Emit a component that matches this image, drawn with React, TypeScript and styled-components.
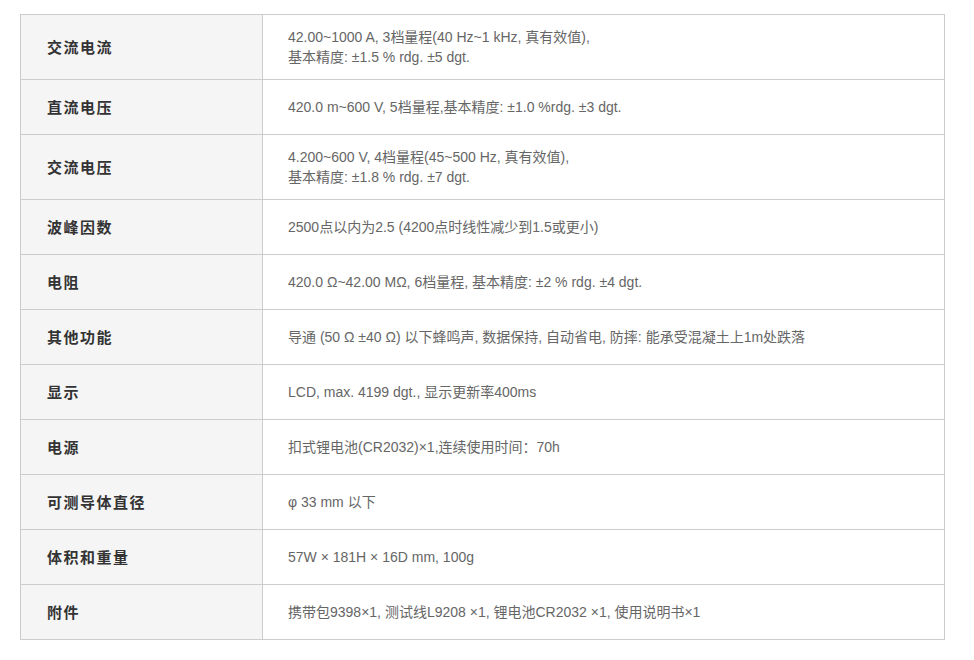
import styled, { createGlobalStyle } from "styled-components";

const Global = createGlobalStyle`
  html, body { margin: 0; padding: 0; background: #fff; }
  body { font-family: "Liberation Sans", Arial, "Noto Sans CJK SC", sans-serif; }
`;

const Page = styled.div`
  padding: 14px 30px 20px 20px;
`;

const SpecTable = styled.table`
  width: 925px;
  border-collapse: collapse;
  border: 1px solid #cccccc;
`;

const Row = styled.tr`
  border-bottom: 1px solid #cccccc;
`;

const Label = styled.th`
  width: 215px;
  height: 30px;
  padding: 11px 0 13px 26px;
  background: #f5f5f5;
  border-right: 1px solid #cccccc;
  text-align: left;
  vertical-align: middle;
  font-family: "Liberation Sans", "Noto Sans CJK SC", sans-serif;
  font-size: 15px;
  font-weight: 700;
  letter-spacing: 1.5px;
  color: #333333;
`;

const Value = styled.td`
  padding: 12px 20px 12px 25px;
  vertical-align: middle;
  font-family: "Liberation Sans", "Noto Sans CJK SC", sans-serif;
  font-size: 14px;
  line-height: 20px;
  color: #666666;
`;

const specs: [string, string[]][] = [
  ["交流电流", ["42.00~1000 A, 3档量程(40 Hz~1 kHz, 真有效值),", "基本精度: ±1.5 % rdg. ±5 dgt."]],
  ["直流电压", ["420.0 m~600 V, 5档量程,基本精度: ±1.0 %rdg. ±3 dgt."]],
  ["交流电压", ["4.200~600 V, 4档量程(45~500 Hz, 真有效值),", "基本精度: ±1.8 % rdg. ±7 dgt."]],
  ["波峰因数", ["2500点以内为2.5 (4200点时线性减少到1.5或更小)"]],
  ["电阻", ["420.0 Ω~42.00 MΩ, 6档量程, 基本精度: ±2 % rdg. ±4 dgt."]],
  ["其他功能", ["导通 (50 Ω ±40 Ω) 以下蜂鸣声, 数据保持, 自动省电, 防摔: 能承受混凝土上1m处跌落"]],
  ["显示", ["LCD, max. 4199 dgt., 显示更新率400ms"]],
  ["电源", ["扣式锂电池(CR2032)×1,连续使用时间：70h"]],
  ["可测导体直径", ["φ 33 mm 以下"]],
  ["体积和重量", ["57W × 181H × 16D mm, 100g"]],
  ["附件", ["携带包9398×1, 测试线L9208 ×1, 锂电池CR2032 ×1, 使用说明书×1"]],
];

export default function App() {
  return (
    <Page>
      <Global />
      <SpecTable>
        <tbody>
          {specs.map(([name, lines]) => (
            <Row key={name}>
              <Label>{name}</Label>
              <Value>
                {lines.map((l, i) => (
                  <span key={i}>
                    {i > 0 && <br />}
                    {l}
                  </span>
                ))}
              </Value>
            </Row>
          ))}
        </tbody>
      </SpecTable>
    </Page>
  );
}
